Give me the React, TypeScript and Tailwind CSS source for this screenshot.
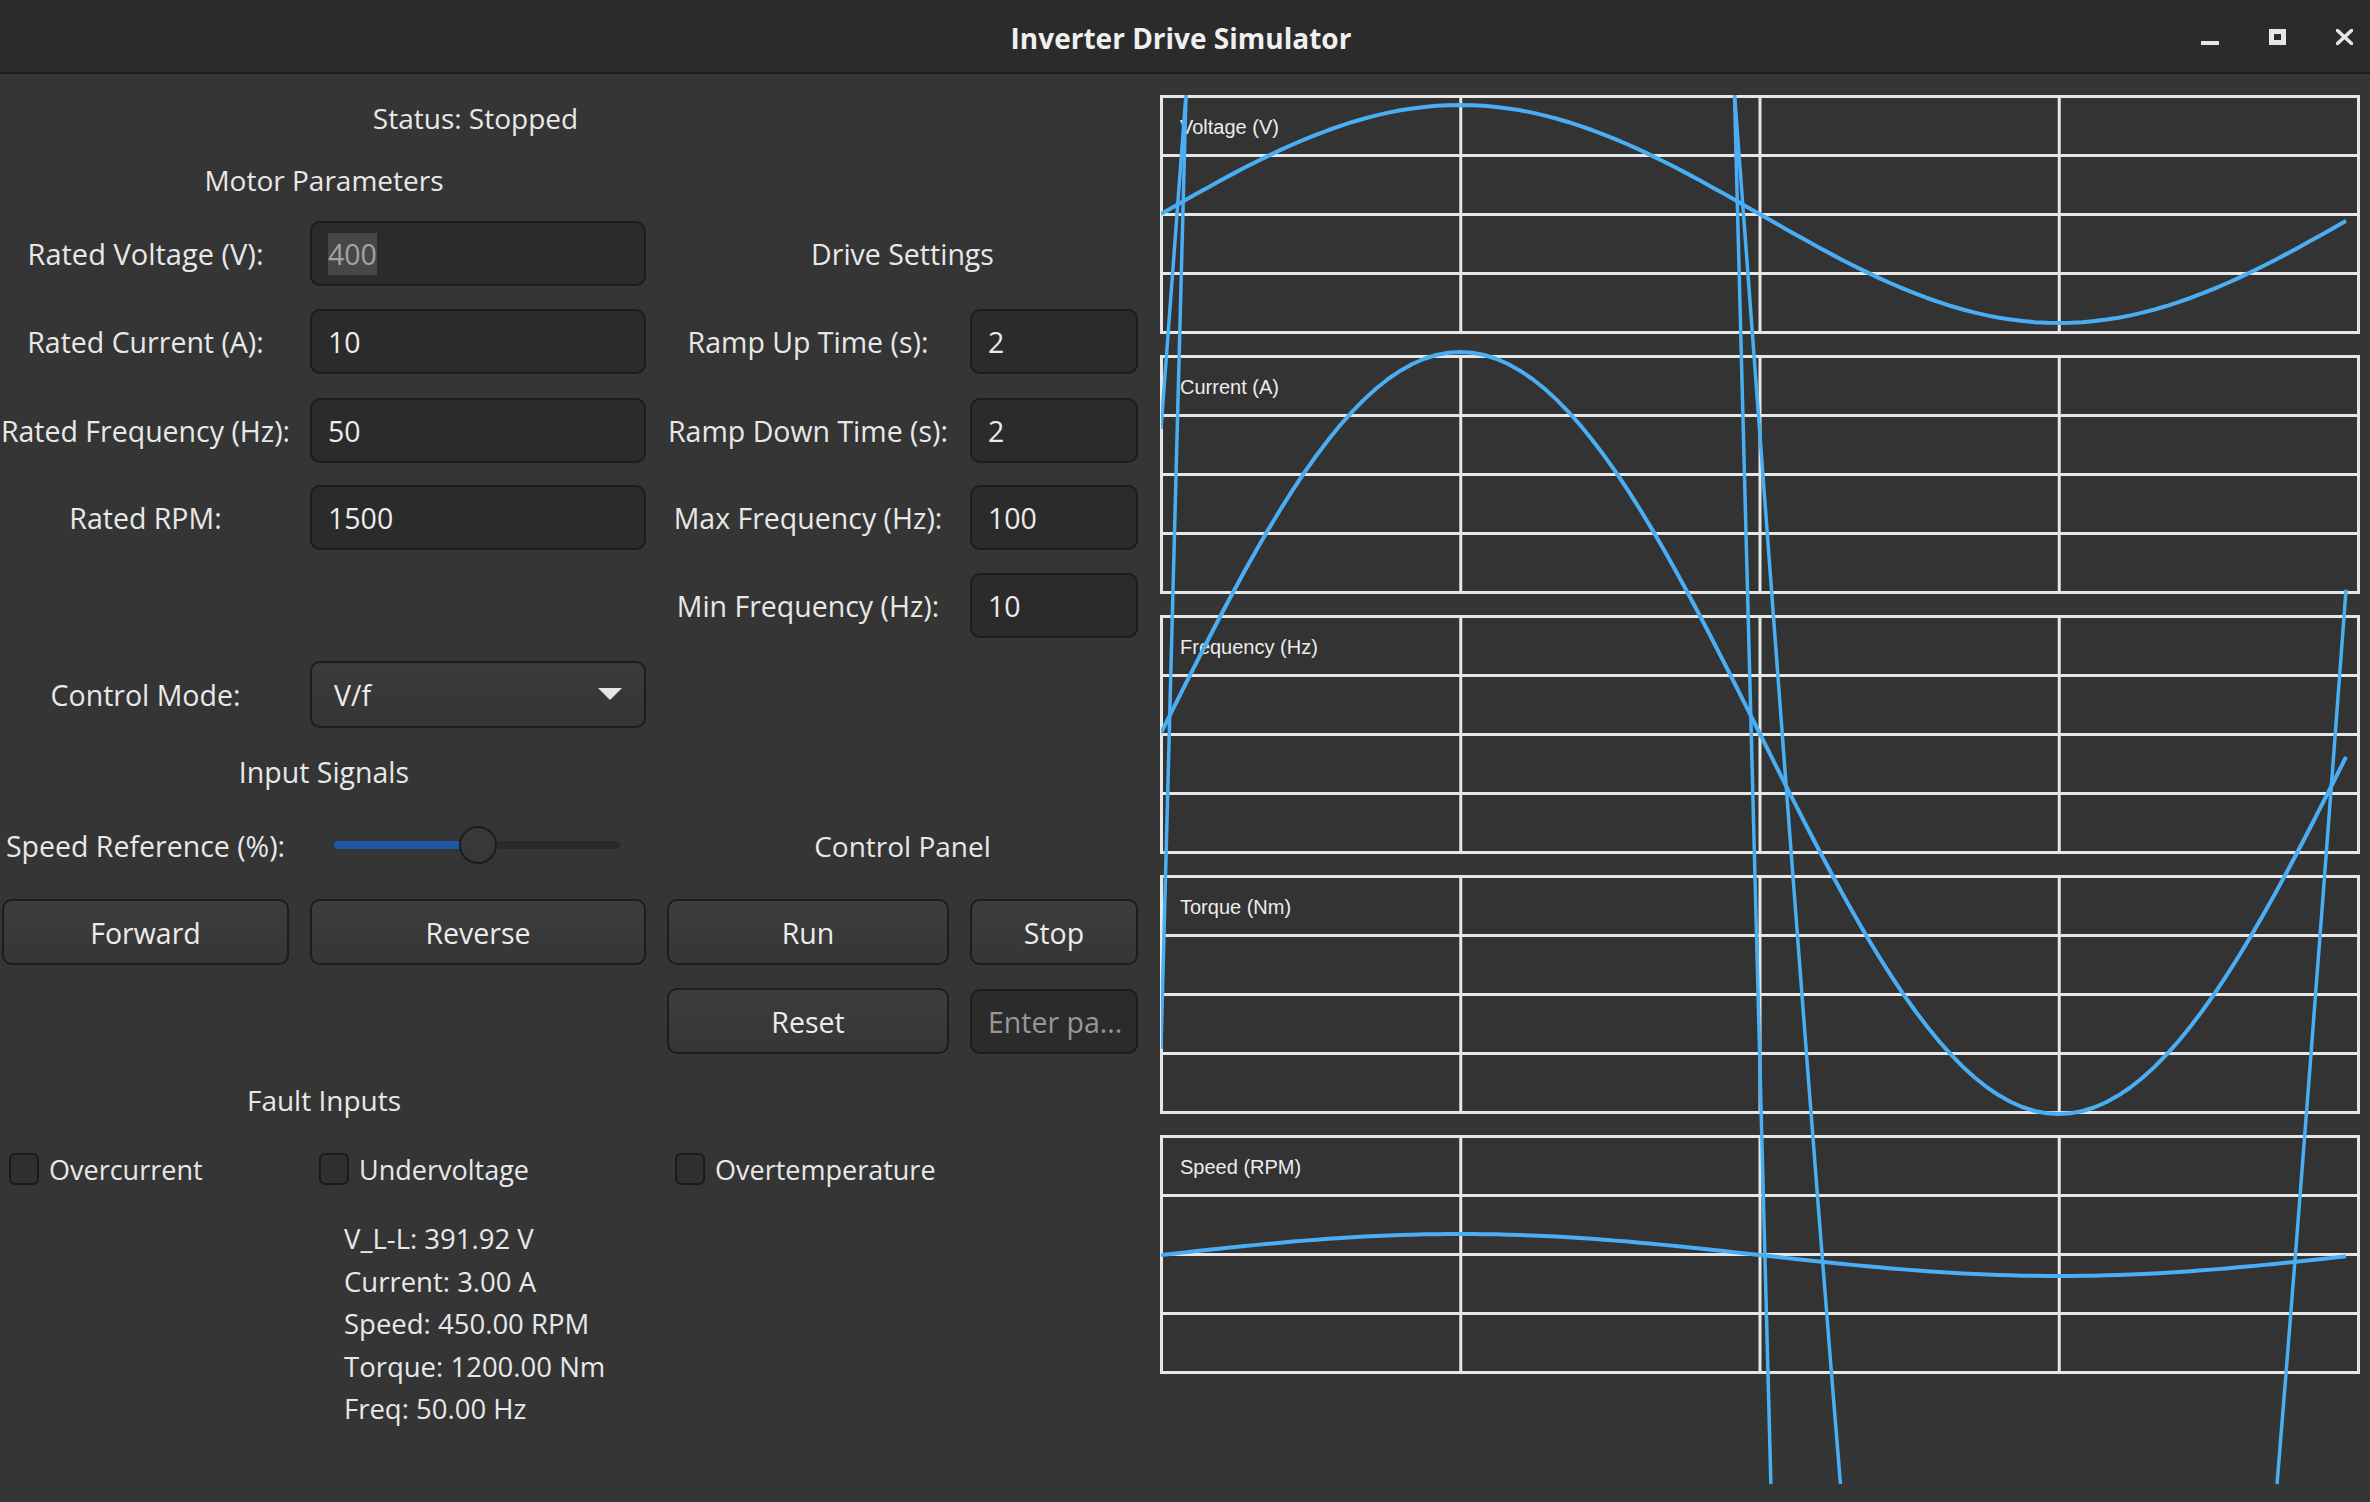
import React from 'react';

const P = 1197;
const X0 = 1161;
function wave(c: number, a: number): string {
  const out: string[] = [];
  for (let t = 0; t < 100; t++) {
    const x = X0 + (t * P) / 100;
    const y = c - a * Math.sin((2 * Math.PI * t) / 100);
    out.push(`${x.toFixed(2)},${y.toFixed(2)}`);
  }
  return out.join(' ');
}

function Field({ value, dim, placeholder }: { value: string; dim?: boolean; placeholder?: boolean }) {
  return (
    <div className="h-[65px] rounded-[10px] border-2 border-[#1c1c1c] bg-[#2b2b2b] flex items-center pl-[16px] pt-[2px]">
      {dim ? (
        <span className="bg-[#474747] text-[#a3a3a3] leading-[42px] h-[42px] flex items-center">{value}</span>
      ) : (
        <span className={placeholder ? 'text-[#979797]' : 'text-[#ececec]'}>{value}</span>
      )}
    </div>
  );
}

function Btn({ children }: { children: React.ReactNode }) {
  return (
    <div className="h-[66px] rounded-[10px] border-2 border-[#1d1d1d] bg-gradient-to-b from-[#3d3d3d] to-[#363636] flex items-center justify-center pt-[2px] text-[#ececec]">
      {children}
    </div>
  );
}

function Lbl({ children, className = '' }: { children: React.ReactNode; className?: string }) {
  return <div className={`flex justify-center whitespace-nowrap pt-[2px] text-[#e8e8e8] ${className}`}>{children}</div>;
}

function Check({ label, pl }: { label: string; pl: string }) {
  return (
    <div className={`flex items-center gap-[10px] ${pl}`}>
      <div className="w-[30px] h-[32px] rounded-[6px] border-2 border-[#1a1a1a] bg-[#2f2f2f]" />
      <span className="text-[#e8e8e8] whitespace-nowrap text-[27px] pt-[3px]">{label}</span>
    </div>
  );
}

function Plot({ label }: { label: string }) {
  const vx = [1, 2, 3].map((k) => 1.5 + 299.25 * k);
  const hy = [1, 2, 3].map((k) => 1.5 + 59 * k);
  return (
    <div className="relative h-[239px] w-[1200px]">
      <svg width="1200" height="239" className="block">
        <rect x="1.5" y="1.5" width="1197" height="236" fill="#333333" stroke="#e6e6e6" strokeWidth="3" />
        {vx.map((x) => (
          <line key={x} x1={x} y1="1.5" x2={x} y2="237.5" stroke="#e6e6e6" strokeWidth="3" />
        ))}
        {hy.map((y) => (
          <line key={y} x1="1.5" y1={y} x2="1198.5" y2={y} stroke="#e6e6e6" strokeWidth="3" />
        ))}
      </svg>
      <div className="absolute left-[20px] top-[20px] text-[20px] leading-[24px] text-[#ececec] font-['Liberation_Sans',Arial,sans-serif] whitespace-nowrap">
        {label}
      </div>
    </div>
  );
}

export default function App() {
  return (
    <div className="w-[2370px] h-[1502px] bg-[#353535] overflow-hidden font-['Open_Sans',sans-serif] text-[28.5px] flex flex-col">
      {/* Title bar */}
      <div className="h-[74px] shrink-0 bg-[#2b2b2b] border-b-2 border-[#1b1b1b] grid grid-cols-[1fr_auto_1fr] items-center">
        <div />
        <div className="text-[28px] font-bold text-[#f0f0f0] pr-[8px] pt-[3px] whitespace-nowrap">Inverter Drive Simulator</div>
        <div className="flex justify-end items-center gap-[50px] pr-[17px] pt-[2px]">
          <div className="w-[18px] h-[16px] flex items-end">
            <div className="w-[18px] h-[4px] bg-[#e6e6e6]" />
          </div>
          <div className="w-[17px] h-[16px] border-[5px] border-[#e6e6e6]" />
          <svg width="17" height="16" viewBox="0 0 17 16">
            <path d="M1.5 1.5 L15.5 14.5 M15.5 1.5 L1.5 14.5" stroke="#e6e6e6" strokeWidth="3.5" strokeLinecap="square" />
          </svg>
        </div>
      </div>

      <div className="flex flex-1 min-h-0">
        {/* Left panel */}
        <div className="w-[1150px] shrink-0 pl-[2px] pt-[13px]">
          <div className="grid grid-cols-[287px_336px_282px_168px] gap-x-[21px] grid-rows-[60px_64px_84px_92px_86px_88px_88px_90px_64px_84px_90px_88px_68px_72px] items-center">
            {/* R1 */}
            <Lbl className="col-span-3 text-[28px]">Status: Stopped</Lbl>
            <div />
            {/* R2 */}
            <Lbl className="col-span-2 text-[28px]">Motor Parameters</Lbl>
            <div className="col-span-2" />
            {/* R3 */}
            <Lbl className="text-[29px]">Rated Voltage (V):</Lbl>
            <Field value="400" dim />
            <Lbl className="col-span-2">Drive Settings</Lbl>
            {/* R4 */}
            <Lbl>Rated Current (A):</Lbl>
            <Field value="10" />
            <Lbl>Ramp Up Time (s):</Lbl>
            <Field value="2" />
            {/* R5 */}
            <Lbl>Rated Frequency (Hz):</Lbl>
            <Field value="50" />
            <Lbl>Ramp Down Time (s):</Lbl>
            <Field value="2" />
            {/* R6 */}
            <Lbl>Rated RPM:</Lbl>
            <Field value="1500" />
            <Lbl>Max Frequency (Hz):</Lbl>
            <Field value="100" />
            {/* R7 */}
            <div className="col-span-2" />
            <Lbl>Min Frequency (Hz):</Lbl>
            <Field value="10" />
            {/* R8 */}
            <Lbl>Control Mode:</Lbl>
            <div className="h-[67px] rounded-[10px] border-2 border-[#1d1d1d] bg-gradient-to-b from-[#3b3b3b] to-[#353535] flex items-center justify-between pl-[22px] pr-[22px] text-[#ececec]">
              <span className="pt-[2px]">V/f</span>
              <svg width="24" height="12" viewBox="0 0 24 12">
                <polygon points="0,0 24,0 12,12" fill="#e6e6e6" />
              </svg>
            </div>
            <div className="col-span-2" />
            {/* R9 */}
            <Lbl className="col-span-2">Input Signals</Lbl>
            <div className="col-span-2" />
            {/* R10 */}
            <Lbl>Speed Reference (%):</Lbl>
            <div className="pl-[24px] pr-[26px]">
              <div className="relative h-[40px] flex items-center">
                <div className="w-full h-[8px] rounded-full bg-[#2a2a2a] flex">
                  <div className="w-[144px] h-[8px] rounded-l-full bg-[#1f56a3]" />
                </div>
                <div className="absolute left-[125px] top-[1px] w-[38px] h-[38px] rounded-full border-2 border-[#1c1c1c] bg-[#383838]" />
              </div>
            </div>
            <Lbl className="col-span-2 text-[28px]">Control Panel</Lbl>
            {/* R11 */}
            <Btn>Forward</Btn>
            <Btn>Reverse</Btn>
            <Btn>Run</Btn>
            <Btn>Stop</Btn>
            {/* R12 */}
            <div className="col-span-2" />
            <Btn>Reset</Btn>
            <Field value="Enter pa..." placeholder />
            {/* R13 */}
            <Lbl className="col-span-2 text-[28px]">Fault Inputs</Lbl>
            <div className="col-span-2" />
            {/* R14 */}
            <Check label="Overcurrent" pl="pl-[7px]" />
            <Check label="Undervoltage" pl="pl-[9px]" />
            <div className="col-span-2">
              <Check label="Overtemperature" pl="pl-[8px]" />
            </div>
            {/* R15 stats */}
            <div />
            <div className="pl-[34px] mt-[13px] self-start">
              <div className="text-left leading-[42.5px] text-[27.5px] text-[#e8e8e8] whitespace-nowrap">
                <div>V_L-L: 391.92 V</div>
                <div>Current: 3.00 A</div>
                <div>Speed: 450.00 RPM</div>
                <div>Torque: 1200.00 Nm</div>
                <div>Freq: 50.00 Hz</div>
              </div>
            </div>
          </div>
        </div>

        {/* Right panel: plots */}
        <div className="relative flex-1 pl-[10px] pt-[21px]">
          <div className="flex flex-col gap-[21px]">
            <Plot label="Voltage (V)" />
            <Plot label="Current (A)" />
            <Plot label="Frequency (Hz)" />
            <Plot label="Torque (Nm)" />
            <Plot label="Speed (RPM)" />
          </div>
          <svg
            className="absolute left-0 top-0 pointer-events-none"
            width="1220"
            height="1427"
            viewBox="1150 75 1220 1427"
          >
            <defs>
              <clipPath id="plotclip">
                <rect x="1161" y="96" width="1197" height="1389" />
              </clipPath>
            </defs>
            <g clipPath="url(#plotclip)" fill="none" stroke="#4aaef5" strokeWidth="4" strokeLinejoin="round">
              <polyline points={wave(215, 109)} />
              <polyline points={wave(734, 381)} />
              <polyline points={wave(1256, 21)} />
              <polyline points={wave(1050, 7287)} strokeWidth="3.5" />
              <polyline points={wave(430, 2560)} strokeWidth="3.5" />
            </g>
          </svg>
        </div>
      </div>
    </div>
  );
}
